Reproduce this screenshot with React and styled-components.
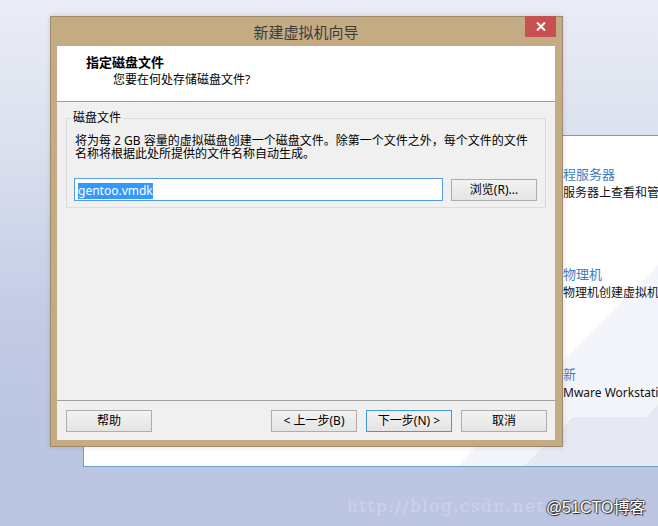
import React from 'react';
import styled, { createGlobalStyle } from 'styled-components';

const GlobalStyle = createGlobalStyle`
  html, body {
    margin: 0;
    padding: 0;
  }
  body {
    width: 658px;
    height: 526px;
    overflow: hidden;
    font-family: "Noto Sans", "Noto Sans CJK SC", sans-serif;
    font-size: 12px;
    color: #000;
  }
`;

const Desktop = styled.div`
  position: relative;
  width: 658px;
  height: 526px;
  overflow: hidden;
  background: linear-gradient(180deg, #eaedf6 0px, #dce1ef 140px, #c3cbe5 320px, #bcc6e2 420px, #bcc6e2 526px);
`;

/* VMware home tab that sits behind the wizard */
const HomePanel = styled.div`
  position: absolute;
  left: 83px;
  top: 135px;
  width: 600px;
  height: 332px;
  box-sizing: border-box;
  background: #fff;
  border: 1px solid #68a3cf;
  border-right: none;
  overflow: hidden;
`;

const Deco = styled.svg`
  position: absolute;
  left: 0;
  top: 0;
`;

const HomeList = styled.div`
  position: relative;
  display: flex;
  flex-direction: column;
  gap: 63px;
  padding: 29px 0 0 479px;
  white-space: nowrap;
`;

const HomeItem = styled.div`
  display: flex;
  flex-direction: column;
  gap: 1px;
`;

const HomeTitle = styled.div`
  font-size: 13px;
  line-height: 18px;
  color: #3f7dc0;
`;

const HomeDesc = styled.div`
  font-size: 12px;
  line-height: 18px;
  color: #111;
`;

/* wizard window */
const Dialog = styled.div`
  position: absolute;
  left: 50px;
  top: 16px;
  width: 513px;
  height: 431px;
  box-sizing: border-box;
  display: flex;
  flex-direction: column;
  padding: 0 7px 6px 6px;
  background: #c5ab83;
  border: 1px solid #9e8b6b;
  box-shadow: 0 0 5px rgba(60, 60, 90, 0.18);
`;

const TitleBar = styled.div`
  height: 29px;
  display: grid;
  grid-template-columns: 1fr auto 1fr;
  align-items: center;
`;

const Title = styled.div`
  grid-column: 2;
  font-family: "Noto Sans CJK SC", sans-serif;
  font-size: 15px;
  line-height: 20px;
  color: #3a3a3a;
`;

const CloseButton = styled.div`
  grid-column: 3;
  justify-self: end;
  align-self: start;
  margin: -1px -1px 0 0;
  width: 31px;
  height: 21px;
  background: #c75050;
  display: flex;
  align-items: center;
  justify-content: center;
`;

const Client = styled.div`
  flex: 1;
  display: flex;
  flex-direction: column;
  background: #f0f0f0;
`;

const Header = styled.div`
  height: 56px;
  box-sizing: border-box;
  padding-top: 8px;
  background: #fff;
  border-bottom: 1px solid #a0a0a0;
`;

const HeaderTitle = styled.div`
  padding-left: 29px;
  font-family: "Noto Sans CJK SC", sans-serif;
  font-weight: bold;
  font-size: 13px;
  line-height: 16px;
`;

const HeaderSub = styled.div`
  margin-top: 2px;
  padding-left: 56px;
  font-size: 12px;
  line-height: 16px;
`;

const Body = styled.div`
  flex: 1;
  padding: 8px 9px 0 9px;
`;

const Group = styled.fieldset`
  margin: 0;
  padding: 8px 8px 6px 7px;
  border: 1px solid #dcdcdc;
  min-width: 0;
`;

const GroupLabel = styled.legend`
  margin-left: -3px;
  padding: 0 2px;
  font-size: 12px;
  line-height: 16px;
`;

const Description = styled.p`
  margin: 0;
  padding-left: 1px;
  font-size: 12px;
  line-height: 13px;
  white-space: nowrap;
`;

const PathRow = styled.div`
  margin-top: 18px;
  display: flex;
  align-items: center;
  gap: 8px;
`;

const PathInput = styled.div`
  flex: 1;
  height: 23px;
  box-sizing: border-box;
  border: 1px solid #569de5;
  background: #fff;
  padding: 3px 0 0 3px;
`;

const Selected = styled.span`
  display: inline-block;
  background: #3399ff;
  color: #fff;
  font-size: 12px;
  line-height: 16px;
`;

const Footer = styled.div`
  display: flex;
  gap: 9px;
  padding: 9px 8px 8px 9px;
  border-top: 1px solid #a0a0a0;
`;

const Button = styled.div`
  width: 86px;
  height: 22px;
  box-sizing: border-box;
  display: flex;
  align-items: center;
  justify-content: center;
  border: 1px solid ${(p) => (p.$primary ? '#3c99e6' : '#adadad')};
  background: linear-gradient(180deg, #f2f2f2, #e4e4e4);
  font-size: 12px;
  line-height: 16px;
  margin-right: ${(p) => (p.$push ? 'auto' : '0')};
`;

const Watermark = styled.div`
  position: absolute;
  left: 347px;
  top: 494px;
  display: flex;
  align-items: center;
  white-space: nowrap;
`;

const CsdnMark = styled.span`
  font-family: "DejaVu Serif", serif;
  font-size: 16.5px;
  color: #cdd3e8;
  letter-spacing: 1.7px;
`;

const CtoMark = styled.span`
  margin-left: 1px;
  font-family: "Liberation Sans", "Noto Sans CJK SC", sans-serif;
  font-size: 16px;
  color: #fff;
  text-shadow: 1px 1px 1px #222, -1px 0 1px #444, 0 -1px 1px #444;
`;

const homeItems = [
  { title: '程服务器', desc: '服务器上查看和管理虚拟机' },
  { title: '物理机', desc: '物理机创建虚拟机。' },
  { title: '新', desc: 'Mware Workstation 的软件更新。' },
];

export default function App() {
  return (
    <Desktop>
      <GlobalStyle />
      <HomePanel>
        <Deco width="600" height="332">
          <polygon points="372,331 575,128 600,128 600,331" fill="#f3f5fa" />
          <polygon points="439,331 489,281 562,281 580,263 600,263 600,331" fill="#e6e9f3" />
        </Deco>
        <HomeList>
          {homeItems.map((item) => (
            <HomeItem key={item.title}>
              <HomeTitle>{item.title}</HomeTitle>
              <HomeDesc>{item.desc}</HomeDesc>
            </HomeItem>
          ))}
        </HomeList>
      </HomePanel>

      <Dialog>
        <TitleBar>
          <Title>新建虚拟机向导</Title>
          <CloseButton>
            <svg width="10" height="9" viewBox="0 0 10 9">
              <path d="M1 0.5 L9 8.5 M9 0.5 L1 8.5" stroke="#fff" strokeWidth="2" />
            </svg>
          </CloseButton>
        </TitleBar>
        <Client>
          <Header>
            <HeaderTitle>指定磁盘文件</HeaderTitle>
            <HeaderSub>您要在何处存储磁盘文件?</HeaderSub>
          </Header>
          <Body>
            <Group>
              <GroupLabel>磁盘文件</GroupLabel>
              <Description>
                将为每 2 GB 容量的虚拟磁盘创建一个磁盘文件。除第一个文件之外，每个文件的文件
                <br />
                名称将根据此处所提供的文件名称自动生成。
              </Description>
              <PathRow>
                <PathInput>
                  <Selected>gentoo.vmdk</Selected>
                </PathInput>
                <Button>浏览(R)...</Button>
              </PathRow>
            </Group>
          </Body>
          <Footer>
            <Button $push>帮助</Button>
            <Button>&lt; 上一步(B)</Button>
            <Button $primary>下一步(N) &gt;</Button>
            <Button>取消</Button>
          </Footer>
        </Client>
      </Dialog>

      <Watermark>
        <CsdnMark>http://blog.csdn.net</CsdnMark>
        <CtoMark>@51CTO博客</CtoMark>
      </Watermark>
    </Desktop>
  );
}
